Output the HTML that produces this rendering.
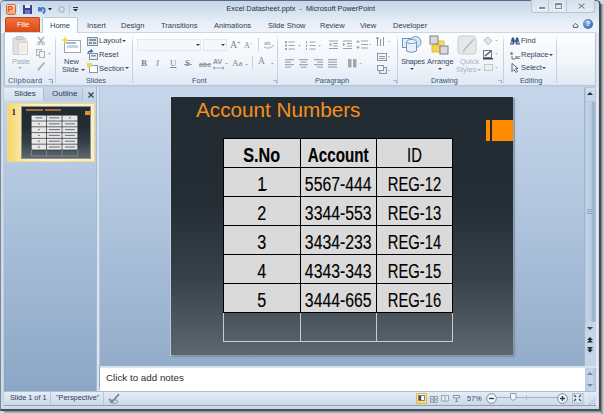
<!DOCTYPE html>
<html><head><meta charset="utf-8">
<style>
*{margin:0;padding:0;box-sizing:border-box}
html,body{width:604px;height:414px;overflow:hidden;background:#3a3d42}
body{position:relative;font-family:"Liberation Sans",sans-serif;font-size:7.5px;color:#34465c}
.a{position:absolute}
.t{position:absolute;white-space:nowrap;line-height:1}
svg{position:absolute;overflow:visible}
#desk{left:0;top:0;width:604px;height:414px;background:#d4d6d8}
#shr{left:601px;top:4px;width:3px;height:410px;background:linear-gradient(90deg,#6a6f75,#b9bcbf 60%,#d0d2d4)}
#deskb{left:4px;top:411px;width:600px;height:3px;background:linear-gradient(#7a7f85,#c4c7ca 70%,#d4d6d8)}
#win{left:0;top:0;width:601px;height:411px;background:linear-gradient(#d3deed,#c4d4e7);border:1px solid #7b8797;border-top-color:#58677e;border-right:2px solid #464c54;border-bottom:2px solid #4a5058;border-radius:5px 5px 0 0}
#title{left:1px;top:1px;width:598px;height:32px;background:linear-gradient(#c6d6ea 0px,#d4e1ef 10px,#e8eff7 22px,#f0f4f9 32px);border-radius:4px 4px 0 0}
#ribbon{left:4px;top:32px;width:592px;height:54px;background:linear-gradient(#fdfefe 0,#f1f5fa 30px,#e7eef7 43px,#dde7f3 53px);border:1px solid #b6c6da;border-top-color:#cbd7e5}
.gs{top:34px;width:1px;height:49px;background:linear-gradient(rgba(197,210,226,0),#c5d2e2 20%,#c5d2e2)}
.gl{top:77px;height:9px;font-size:7.3px;color:#3b5270}
#pane{left:4px;top:87px;width:92px;height:304px;background:linear-gradient(#c7d8eb,#8aa6c5)}
#main{left:99px;top:87px;width:486px;height:279px;background:linear-gradient(#bccfe6,#91abc9)}
#slide{left:171px;top:97px;width:342px;height:258px;background:linear-gradient(#222b32 0%,#242d34 40%,#36414a 70%,#5c676f 100%);box-shadow:1px 1px 2px rgba(40,50,70,.5)}
#notes{left:99px;top:366px;width:486px;height:25px;background:#fff;border-top:2px solid #d6e1ee}
#status{left:1px;top:391px;width:597px;height:15px;background:linear-gradient(#e2eaf4,#c6d5e7);border-top:1px solid #b8c6d8;border-bottom:1px solid #92a4ba}
.tab{top:22px;font-size:7.5px;color:#2b3d55}
.ct{text-align:center;font-size:20px;color:#000;-webkit-text-stroke:0.15px #000;transform:scaleX(.85);transform-origin:center}
.cell{position:absolute;background:#dadada;text-align:center;color:#000;font-size:18px;line-height:1}
</style></head><body>
<div id="desk" class="a"></div>
<div id="deskb" class="a"></div>
<div id="shr" class="a"></div>
<div id="win" class="a"></div>
<div id="title" class="a"></div>

<!-- quick access -->
<div class="a" style="left:5.5px;top:4px;width:10.5px;height:10.5px;background:linear-gradient(#f9d2b6,#f0a679);border:1px solid #d96a36;border-radius:1.5px"></div>
<div class="t" style="left:7.5px;top:5px;font-size:8.5px;font-weight:bold;color:#d9541c">P</div>
<div class="a" style="left:18px;top:4px;width:1px;height:10px;background:#f4f7fb"></div>
<svg style="left:23px;top:5px" width="9" height="9"><rect x="0" y="0" width="9" height="9" fill="#3d4199"/><rect x="2" y="0" width="5" height="3" fill="#e8ecf6"/><rect x="2" y="5" width="5" height="4" fill="#6d76c4"/></svg>
<svg style="left:37px;top:5px" width="9" height="9"><path d="M2 2 L2 5.5 L5.5 5.5 M2.5 5 Q5 1.5 7.5 4 Q8.5 6.5 6 8.5" stroke="#3f78c6" stroke-width="1.8" fill="none"/></svg>
<svg style="left:48px;top:8px" width="4" height="3"><path d="M0 0 H4 L2 2.5Z" fill="#222"/></svg>
<svg style="left:58px;top:6px" width="7" height="7"><circle cx="3.5" cy="3.5" r="2.7" stroke="#b3b9c2" stroke-width="1.3" fill="none"/></svg>
<div class="a" style="left:69px;top:4px;width:1px;height:10px;background:#b9c4d2"></div>
<div class="a" style="left:73px;top:7px;width:5px;height:1px;background:#333"></div>
<svg style="left:73px;top:9px" width="5" height="3"><path d="M0 0 H5 L2.5 2.5Z" fill="#222"/></svg>
<div class="t" style="left:226.5px;top:4.5px;font-size:7.3px;color:#1f2d3f">Excel Datasheet.pptx&nbsp; -&nbsp; Microsoft PowerPoint</div>
<!-- caption buttons -->
<div class="a" style="left:531px;top:0;width:64px;height:13px;border:1px solid #b9c4d1;border-top:none;border-radius:0 0 3px 3px;background:linear-gradient(#d6e0ec,#e4ebf4)"></div>
<div class="a" style="left:548px;top:0;width:1px;height:12px;background:#bcc7d4"></div>
<div class="a" style="left:566px;top:0;width:1px;height:12px;background:#bcc7d4"></div>
<div class="a" style="left:538px;top:6.5px;width:7px;height:3px;background:#fff"></div>
<div class="a" style="left:538.5px;top:7px;width:6px;height:2px;background:#7f8893"></div>
<div class="a" style="left:555px;top:2.5px;width:7px;height:6px;border:1px solid #7f8893;border-top-width:2px;box-shadow:0 0 0 0.5px #fff"></div>
<svg style="left:577.5px;top:3px" width="7" height="6"><path d="M0.5 0.5 L6.5 5.5 M6.5 0.5 L0.5 5.5" stroke="#fff" stroke-width="2.6"/><path d="M0.5 0.5 L6.5 5.5 M6.5 0.5 L0.5 5.5" stroke="#7f8893" stroke-width="1.4"/></svg>

<!-- tabs -->
<div class="a" style="left:5px;top:17px;width:35px;height:15px;background:linear-gradient(#f0703a,#d84b17);border:1px solid #c14615;border-bottom:none;border-radius:2px 2px 0 0"></div>
<div class="t" style="left:17px;top:21px;font-size:7.5px;color:#fff">File</div>
<div class="a" style="left:42px;top:17px;width:36px;height:16px;background:linear-gradient(#fdfeff,#fbfcfe);border:1px solid #bccbdc;border-bottom:none;border-radius:2px 2px 0 0;z-index:2"></div>
<div class="t tab" style="left:50px;z-index:3">Home</div>
<div class="t tab" style="left:87px">Insert</div>
<div class="t tab" style="left:121px">Design</div>
<div class="t tab" style="left:161px">Transitions</div>
<div class="t tab" style="left:214px">Animations</div>
<div class="t tab" style="left:268px">Slide Show</div>
<div class="t tab" style="left:320px">Review</div>
<div class="t tab" style="left:360px">View</div>
<div class="t tab" style="left:393px">Developer</div>
<svg style="left:571.5px;top:22.5px" width="7" height="5"><path d="M0.5 3 L3.5 0.5 L6.5 3 M1.5 3 V4.5 H5.5 V3" stroke="#5a6573" stroke-width="1" fill="none"/></svg>
<div class="a" style="left:583px;top:19px;width:10px;height:10px;border-radius:50%;background:radial-gradient(circle at 40% 35%,#8fb6e6,#3c6fb8 70%,#2c5699)"></div>
<div class="t" style="left:585.5px;top:20px;font-size:8px;font-weight:bold;color:#fff">?</div>

<div id="ribbon" class="a"></div>
<!-- group separators -->
<div class="a gs" style="left:55px"></div>
<div class="a gs" style="left:132px"></div>
<div class="a gs" style="left:277px"></div>
<div class="a gs" style="left:397px"></div>
<div class="a gs" style="left:503px"></div>
<div class="a gs" style="left:556px"></div>
<div class="t gl" style="left:8px;letter-spacing:0.35px">Clipboard</div>
<div class="t gl" style="left:86px">Slides</div>
<div class="t gl" style="left:192px">Font</div>
<div class="t gl" style="left:315px">Paragraph</div>
<div class="t gl" style="left:431px">Drawing</div>
<div class="t gl" style="left:520px">Editing</div>


<!-- CLIPBOARD -->
<svg style="left:12px;top:36px" width="17" height="20"><rect x="1" y="2" width="13" height="16.5" rx="1" fill="#e0e1e3" stroke="#c9cbce"/><rect x="4" y="0.5" width="7" height="3" rx="1" fill="#d2d4d7" stroke="#bfc2c6"/><path d="M6.5 6.5 H15.5 V18.5 H6.5Z" fill="#f7f6ee" stroke="#cfd0d0"/><path d="M8 9 H14 M8 11 H14 M8 13 H14 M8 15 H14" stroke="#e9e4cc" stroke-width="0.8"/></svg>
<div class="t" style="left:12px;top:58px;color:#a3aab2;letter-spacing:-0.25px">Paste</div>
<svg style="left:18px;top:67px" width="4" height="3"><path d="M0 0 H4 L2 2Z" fill="#aab"/></svg>
<svg style="left:37px;top:37px" width="8" height="8"><path d="M1 0 L6 6 M7 0 L2 6" stroke="#a4a9b0" stroke-width="1.2"/><circle cx="1.8" cy="6.5" r="1.3" fill="none" stroke="#a4a9b0"/><circle cx="6.2" cy="6.5" r="1.3" fill="none" stroke="#a4a9b0"/></svg>
<svg style="left:36px;top:49px" width="10" height="9"><rect x="0.5" y="0.5" width="5" height="6" fill="#eee" stroke="#aeb3ba"/><rect x="3.5" y="2.5" width="5" height="6" fill="#f4f4f4" stroke="#aeb3ba"/></svg>
<svg style="left:48px;top:53px" width="4" height="3"><path d="M0 0 H3 L1.5 1.8Z" fill="#aab"/></svg>
<svg style="left:37px;top:62px" width="9" height="9"><path d="M7.5 0.5 L3 5.5 M3.5 5 L1 8.5" stroke="#a5abb3" stroke-width="1.6"/></svg>
<svg style="left:48px;top:79px" width="5" height="5"><path d="M0.5 0.5 H4.5 V4.5 M4.5 4.5 L2 2" stroke="#7d8ea4" stroke-width="0.8" fill="none"/></svg>

<!-- SLIDES -->
<svg style="left:61px;top:36px" width="21" height="18"><rect x="3.5" y="4.5" width="16" height="12" fill="#fff" stroke="#9aa8ba"/><rect x="6" y="9" width="11" height="3" fill="#c9d4e3"/><rect x="5" y="6" width="10" height="2" fill="#aab7c8"/><path d="M4 0 L5 3 L8 4 L5 5 L4 8 L3 5 L0 4 L3 3Z" fill="#f2d640"/></svg>
<div class="t" style="left:64px;top:58px">New</div>
<div class="t" style="left:62px;top:66px">Slide</div>
<svg style="left:81px;top:69px" width="4" height="3"><path d="M0 0 H4 L2 2Z" fill="#445"/></svg>
<svg style="left:87px;top:37px" width="11" height="9"><rect x="0.5" y="0.5" width="10" height="8" fill="#dde4ee" stroke="#7f8ea3"/><rect x="2" y="2" width="7" height="2" fill="#8595ab"/><rect x="2" y="5" width="3" height="2" fill="#8595ab"/><rect x="6" y="5" width="3" height="2" fill="#8595ab"/></svg>
<div class="t" style="left:99px;top:37px">Layout</div>
<svg style="left:122px;top:40px" width="4" height="3"><path d="M0 0 H4 L2 2Z" fill="#445"/></svg>
<svg style="left:87px;top:50px" width="11" height="10"><rect x="2.5" y="3.5" width="8" height="6" fill="#e8eef6" stroke="#7f8ea3"/><rect x="4" y="5" width="5" height="1.5" fill="#8595ab"/><path d="M1 4 Q1 0.5 5 1 L4 -0.5 M5 1 L3.5 2.5" stroke="#3c64a8" stroke-width="1.4" fill="none"/></svg>
<div class="t" style="left:99px;top:50.5px">Reset</div>
<svg style="left:87px;top:63px" width="11" height="10"><rect x="2.5" y="2.5" width="8" height="7" fill="#fff" stroke="#8a98ab"/><rect x="0" y="0" width="5" height="4" fill="#f1d45e"/></svg>
<div class="t" style="left:99px;top:64.5px">Section</div>
<svg style="left:125px;top:67px" width="4" height="3"><path d="M0 0 H4 L2 2Z" fill="#445"/></svg>

<!-- FONT -->
<div class="a" style="left:137px;top:39px;width:64px;height:12px;background:#f4f7fb;border:1px solid #e0e7f0"></div>
<svg style="left:196px;top:44px" width="4" height="3"><path d="M0 0 H4 L2 2Z" fill="#333"/></svg>
<div class="a" style="left:203px;top:39px;width:24px;height:12px;background:#f4f7fb;border:1px solid #e0e7f0"></div>
<svg style="left:221px;top:44px" width="4" height="3"><path d="M0 0 H4 L2 2Z" fill="#333"/></svg>
<div class="t" style="left:230px;top:40px;font-size:10px;font-family:'Liberation Serif',serif;color:#7a8594">A</div>
<div class="t" style="left:237px;top:39px;font-size:6px;color:#7a8594">+</div>
<div class="t" style="left:244px;top:42px;font-size:8px;font-family:'Liberation Serif',serif;color:#7a8594">A</div>
<div class="t" style="left:250px;top:40px;font-size:6px;color:#7a8594">-</div>
<div class="a" style="left:258px;top:38px;width:1px;height:13px;background:#c8d3e0"></div>
<svg style="left:263px;top:38px" width="12" height="12"><text x="1" y="7" font-size="6" fill="#8a94a0" font-family="Liberation Sans">ab</text><path d="M1 9 Q6 12 11 7" stroke="#a6adb6" fill="none"/></svg>
<div class="t" style="left:141px;top:58.5px;font-size:9px;font-weight:bold;font-family:'Liberation Serif',serif;color:#7c8794">B</div>
<div class="t" style="left:156px;top:58.5px;font-size:9px;font-style:italic;font-family:'Liberation Serif',serif;color:#7c8794">I</div>
<div class="t" style="left:170px;top:58.5px;font-size:9px;text-decoration:underline;font-family:'Liberation Serif',serif;color:#7c8794">U</div>
<div class="t" style="left:185px;top:58.5px;font-size:9px;font-weight:bold;font-family:'Liberation Serif',serif;color:#7c8794">S</div>
<div class="a" style="left:184px;top:63.5px;width:8px;height:1px;background:#9aa3ad"></div>
<div class="t" style="left:199px;top:60.5px;font-size:7px;font-weight:bold;color:#8c96a1">abc</div>
<div class="a" style="left:199px;top:63.5px;width:12px;height:1px;background:#8c96a1"></div>
<div class="t" style="left:213px;top:57.5px;font-size:7px;font-weight:bold;color:#8c96a1">AV</div>
<svg style="left:213px;top:65.5px" width="11" height="4"><path d="M0 2 H11 M0 2 L2 0.5 M0 2 L2 3.5 M11 2 L9 0.5 M11 2 L9 3.5" stroke="#8c96a1" stroke-width="0.8"/></svg>
<svg style="left:225px;top:62.5px" width="3" height="2"><path d="M0 0 H3 L1.5 1.5Z" fill="#9aa"/></svg>
<div class="t" style="left:232px;top:58.5px;font-size:9px;font-family:'Liberation Serif',serif;color:#7c8794">Aa</div>
<svg style="left:245px;top:63.5px" width="3" height="2"><path d="M0 0 H3 L1.5 1.5Z" fill="#9aa"/></svg>
<div class="a" style="left:252px;top:56px;width:1px;height:13px;background:#c8d3e0"></div>
<div class="t" style="left:258px;top:56.5px;font-size:9.5px;font-family:'Liberation Serif',serif;color:#8690a0">A</div>
<svg style="left:271px;top:62.5px" width="3" height="2"><path d="M0 0 H3 L1.5 1.5Z" fill="#9aa"/></svg>
<svg style="left:273px;top:80px" width="4" height="4"><path d="M0.5 0.5 H3.5 V3.5" stroke="#95a3b5" stroke-width="0.8" fill="none"/></svg>

<!-- PARAGRAPH -->
<svg style="left:285px;top:40px" width="40" height="10">
 <g fill="#97a1ac"><rect x="0" y="1" width="2" height="2"/><rect x="0" y="4.5" width="2" height="2"/><rect x="0" y="8" width="2" height="2"/>
 <rect x="3.5" y="1.5" width="6" height="1"/><rect x="3.5" y="5" width="6" height="1"/><rect x="3.5" y="8.5" width="6" height="1"/>
 <rect x="21" y="1" width="1" height="2.5"/><rect x="21" y="4.5" width="1" height="2.5"/><rect x="21" y="8" width="1" height="2"/>
 <rect x="24.5" y="1.5" width="6" height="1"/><rect x="24.5" y="5" width="6" height="1"/><rect x="24.5" y="8.5" width="6" height="1"/></g>
 <path d="M13 5 H16 L14.5 6.5Z M33 5 H36 L34.5 6.5Z" fill="#a6aeb8"/>
</svg>
<svg style="left:329px;top:40px" width="42" height="10">
 <g fill="#97a1ac"><rect x="0" y="0.5" width="9" height="1"/><rect x="4" y="3" width="5" height="1"/><rect x="4" y="5.5" width="5" height="1"/><rect x="0" y="8" width="9" height="1"/><path d="M0 4.5 L2.5 2.8 V6.2Z"/>
 <rect x="14" y="0.5" width="9" height="1"/><rect x="18" y="3" width="5" height="1"/><rect x="18" y="5.5" width="5" height="1"/><rect x="14" y="8" width="9" height="1"/><path d="M16.5 4.5 L14 2.8 V6.2Z"/>
 <rect x="32" y="0.5" width="7" height="1"/><rect x="32" y="4" width="7" height="1"/><rect x="32" y="7.5" width="7" height="1"/><path d="M29 0 L31 2.5 H27Z M29 9 L31 6.5 H27Z"/></g>
 <path d="M40 4 H42 L41 5.5Z" fill="#a6aeb8"/>
</svg>
<svg style="left:285px;top:59px" width="80" height="9">
 <g fill="#9ea7b2"><rect x="0" y="0" width="9" height="1.2"/><rect x="0" y="2.5" width="6" height="1.2"/><rect x="0" y="5" width="9" height="1.2"/><rect x="0" y="7.5" width="6" height="1.2"/>
 <rect x="14" y="0" width="9" height="1.2"/><rect x="15.5" y="2.5" width="6" height="1.2"/><rect x="14" y="5" width="9" height="1.2"/><rect x="15.5" y="7.5" width="6" height="1.2"/>
 <rect x="29" y="0" width="9" height="1.2"/><rect x="32" y="2.5" width="6" height="1.2"/><rect x="29" y="5" width="9" height="1.2"/><rect x="32" y="7.5" width="6" height="1.2"/>
 <rect x="43" y="0" width="9" height="1.2"/><rect x="43" y="2.5" width="9" height="1.2"/><rect x="43" y="5" width="9" height="1.2"/><rect x="43" y="7.5" width="9" height="1.2"/>
 <rect x="63" y="0" width="3.5" height="8.5"/><rect x="68" y="0" width="3.5" height="8.5"/></g>
 <path d="M74.5 4 H77 L75.75 5.5Z" fill="#a6aeb8"/>
</svg>

<svg style="left:376px;top:36px" width="16" height="40">
 <g stroke="#8d97a3" fill="none" stroke-width="1"><path d="M1.5 1 V10 M4.5 3 V10 M7.5 1 V10 M0 3 L1.5 1 L3 3"/>
 <rect x="1.5" y="17.5" width="9" height="7"/><path d="M3 20.5 H9 M3 22.5 H9"/>
 <rect x="3.5" y="31.5" width="7" height="6" fill="#e6ebf1"/><rect x="1.5" y="29.5" width="6" height="5" fill="#eef1f5"/></g>
 <path d="M12 5 H14 L13 6.5Z M12 20 H14 L13 21.5Z M12 34 H14 L13 35.5Z" fill="#a6aeb8"/>
</svg>
<svg style="left:393px;top:80px" width="4" height="4"><path d="M0.5 0.5 H3.5 V3.5" stroke="#95a3b5" stroke-width="0.8" fill="none"/></svg>

<!-- DRAWING -->
<svg style="left:402px;top:35px" width="21" height="19">
 <circle cx="13.5" cy="7" r="5.5" fill="#d6e6f7" stroke="#6d95c2"/>
 <rect x="0.5" y="3.5" width="9" height="9" fill="#e3eefa" stroke="#6d95c2"/>
 <path d="M4.5 6.5 V16 Q9.5 19 14.5 16 V6.5" fill="#e8f1fb" stroke="#6d95c2"/>
 <ellipse cx="9.5" cy="6.5" rx="5" ry="2" fill="#f4f8fd" stroke="#6d95c2"/>
</svg>
<div class="t" style="left:401px;top:58px;letter-spacing:-0.3px">Shapes</div>
<svg style="left:410px;top:68px" width="4" height="3"><path d="M0 0 H4 L2 2Z" fill="#445"/></svg>
<svg style="left:429px;top:35px" width="21" height="20">
 <rect x="7" y="6" width="8" height="8" fill="#f7de5a" stroke="#e2bf33"/>
 <rect x="3" y="10" width="8" height="7" fill="#f2d54c" stroke="#dfbd38"/>
 <rect x="1" y="1" width="8" height="8" fill="#d9d9de" stroke="#7e8088"/>
 <rect x="11" y="11" width="8" height="8" fill="#d9d9de" stroke="#7e8088"/>
</svg>
<div class="t" style="left:427px;top:58px">Arrange</div>
<svg style="left:438px;top:68px" width="4" height="3"><path d="M0 0 H4 L2 2Z" fill="#445"/></svg>
<svg style="left:457px;top:35px" width="21" height="20"><rect x="1" y="1" width="18" height="18" rx="3" fill="#e6e8ea" stroke="#c8ccd1"/><path d="M17 4 L8 14 L6 17" stroke="#b9bec4" stroke-width="1.6" fill="none"/></svg>
<div class="t" style="left:460px;top:58px;color:#a8b0ba">Quick</div>
<div class="t" style="left:456px;top:66px;color:#a8b0ba">Styles</div>
<svg style="left:477px;top:69px" width="4" height="3"><path d="M0 0 H4 L2 2Z" fill="#aab"/></svg>
<svg style="left:483px;top:37px" width="16" height="40">
 <path d="M1 3 L5 0 L9 4 L5 8Z" fill="#e2e4e7" stroke="#bcc1c7"/>
 <path d="M12 3 H15 L13.5 4.5Z M12 16 H15 L13.5 17.5Z M12 30 H15 L13.5 31.5Z" fill="#b9c0c8"/>
 <rect x="0.5" y="13.5" width="8" height="7" fill="#f0f2f4" stroke="#6f7a86"/><path d="M2 19 L8 14" stroke="#4a5a6e" stroke-width="1.3"/><rect x="0" y="21" width="10" height="1.5" fill="#3a4656"/>
 <rect x="1.5" y="27.5" width="8" height="6" fill="#eceef0" stroke="#c3c8ce"/>
</svg>
<svg style="left:498px;top:80px" width="4" height="4"><path d="M0.5 0.5 H3.5 V3.5" stroke="#95a3b5" stroke-width="0.8" fill="none"/></svg>

<!-- EDITING -->
<svg style="left:509.5px;top:36.5px" width="10" height="8"><g fill="#34558e"><path d="M0 7.5 L2 0.5 H4 L4.5 3.5 H5.5 L6 0.5 H8 L10 7.5 H6 L5.5 5 H4.5 L4 7.5Z"/></g><rect x="1" y="4.5" width="2" height="2" fill="#8fb3e3"/><rect x="7" y="4.5" width="2" height="2" fill="#8fb3e3"/></svg>
<div class="t" style="left:521px;top:37px">Find</div>
<svg style="left:510px;top:50px" width="11" height="10"><text x="0" y="5" font-size="5" fill="#333" font-family="Liberation Sans">a</text><text x="5" y="9" font-size="5" fill="#333" font-family="Liberation Sans">ac</text><path d="M2 6 V9 H5" stroke="#3a8a3a" fill="none"/></svg>
<div class="t" style="left:521px;top:50.5px">Replace</div>
<svg style="left:549px;top:54px" width="4" height="3"><path d="M0 0 H4 L2 2Z" fill="#445"/></svg>
<svg style="left:511px;top:63px" width="9" height="10"><path d="M1 0.5 V8.5 L3 6.5 L5 9.5 L6.5 8.5 L4.5 5.5 H7Z" fill="#fff" stroke="#4b5563" stroke-width="0.9"/></svg>
<div class="t" style="left:521px;top:64px">Select</div>
<svg style="left:542px;top:67px" width="4" height="3"><path d="M0 0 H4 L2 2Z" fill="#445"/></svg>


<div class="a" style="left:1px;top:86px;width:597px;height:323px;background:linear-gradient(#c9d9ec,#8ea9c7 300px,#d0dcea 305px)"></div>
<div id="pane" class="a" style="left:4px;top:87px;width:93px;height:304px;background:linear-gradient(#c6d7ea 0,#b3c8e0 30%,#8ba6c5 100%);border-right:1px solid #a3b8d1"></div>
<div class="a" style="left:97px;top:87px;width:2px;height:304px;background:#dbe5f1"></div>
<div class="a" style="left:99px;top:87px;width:1px;height:279px;background:#b4c6db"></div>
<div class="a" style="left:1px;top:33px;width:3px;height:376px;background:linear-gradient(90deg,#c6d3e2,#dae4ef 60%,#a8b9ce)"></div>
<div class="a" style="left:596px;top:33px;width:3px;height:376px;background:linear-gradient(90deg,#dbe5f0,#e6edf5 50%,#c4d0de)"></div>
<div class="a" style="left:4px;top:85px;width:592px;height:2px;background:linear-gradient(#b3c3d7,#c4d2e3)"></div>
<!-- pane tabs -->
<div class="a" style="left:4px;top:88px;width:39px;height:13px;background:linear-gradient(#e3ecf6,#d3e0ef)"></div>
<div class="a" style="left:43px;top:88px;width:40px;height:13px;background:linear-gradient(#c9d8ea,#bccde2);border-left:1px solid #aebfd5;border-right:1px solid #aebfd5"></div>
<div class="a" style="left:83px;top:88px;width:13px;height:13px;background:linear-gradient(#cfdcec,#c2d2e6)"></div>
<div class="t" style="left:14px;top:90px;font-size:8px;color:#26384e">Slides</div>
<div class="t" style="left:52px;top:90px;font-size:8px;color:#26384e">Outline</div>
<svg style="left:88px;top:92px" width="6" height="6"><path d="M0.5 0.5 L5.5 5.5 M5.5 0.5 L0.5 5.5" stroke="#3a4654" stroke-width="1.3"/></svg>
<!-- thumbnail -->
<div class="a" style="left:7px;top:103px;width:88px;height:59px;background:linear-gradient(90deg,#f7d66b 0,#fae8a6 14px,#fdf3cc 40%,#fbeec0 100%);border:1px solid #f2d98a"></div>
<div class="t" style="left:11.5px;top:107.5px;font-size:9px;font-weight:bold;font-family:'Liberation Serif',serif;color:#1d2a3a">1</div>
<div class="a" style="left:21px;top:106px;width:70px;height:53px;background:linear-gradient(#222b32 0%,#242d34 40%,#36414a 70%,#5c676f 100%);border:1px solid #8a8f90"></div>
<div class="a" style="left:26px;top:108.5px;width:17px;height:2px;background:#a06c30"></div><div class="a" style="left:44.5px;top:108.5px;width:16px;height:2px;background:#a06c30"></div>
<div class="a" style="left:85px;top:111px;width:5px;height:4px;background:#f39018"></div>
<svg style="left:31px;top:115px" width="48" height="42"><rect x="0" y="0" width="47" height="35" fill="#e8e8e8"/><g stroke="#2a2f35" stroke-width="0.7" fill="none"><path d="M0 0.3 H47 M0 6 H47 M0 11.8 H47 M0 17.6 H47 M0 23.4 H47 M0 29.2 H47 M0 35 H47 M0.3 0 V35 M15.5 0 V35 M31 0 V35 M46.7 0 V35"/></g><g stroke="#9aa0a6" stroke-width="0.6" fill="none"><path d="M0.3 35 V41 H46.7 V35 M15.5 35 V41 M31 35 V41"/></g><g fill="#7d8186"><rect x="4.4" y="2.2" width="7" height="1.2"/><rect x="18.2" y="2.2" width="10" height="1.2"/><rect x="37.9" y="2.2" width="2" height="1.2"/><rect x="6.9" y="8.2" width="2" height="1.2"/><rect x="17.8" y="8.2" width="11" height="1.2"/><rect x="33.9" y="8.2" width="10" height="1.2"/><rect x="6.9" y="14.0" width="2" height="1.2"/><rect x="17.8" y="14.0" width="11" height="1.2"/><rect x="33.9" y="14.0" width="10" height="1.2"/><rect x="6.9" y="19.8" width="2" height="1.2"/><rect x="17.8" y="19.8" width="11" height="1.2"/><rect x="33.9" y="19.8" width="10" height="1.2"/><rect x="6.9" y="25.6" width="2" height="1.2"/><rect x="17.8" y="25.6" width="11" height="1.2"/><rect x="33.9" y="25.6" width="10" height="1.2"/><rect x="6.9" y="31.4" width="2" height="1.2"/><rect x="17.8" y="31.4" width="11" height="1.2"/><rect x="33.9" y="31.4" width="10" height="1.2"/></g></svg>

<!-- main -->
<div id="main" class="a" style="left:100px;top:87px;width:485px;height:279px;background:linear-gradient(#c6d6ea 0,#b3c7df 40%,#93acc9 100%)"></div>
<div class="a" style="left:170px;top:96px;width:344px;height:260px;background:#dfe7f0;opacity:.55"></div>
<div id="slide" class="a" style="left:171px;top:97px;width:342px;height:258px;background:linear-gradient(#222b32 0%,#242d34 40%,#36414a 70%,#5c676f 100%)"></div>
<div class="a" style="left:172px;top:356px;width:343px;height:1px;background:#7d90a8;opacity:.7"></div>
<div class="a" style="left:514px;top:98px;width:1px;height:258px;background:#7d90a8;opacity:.7"></div>
<div class="t" style="left:196px;top:99.5px;font-size:20.7px;color:#f5901c">Account Numbers</div>
<div class="a" style="left:486px;top:120px;width:4px;height:21px;background:#ff8c00"></div>
<div class="a" style="left:492px;top:120px;width:21px;height:21px;background:#ff8c00"></div>

<!-- table -->
<div class="a" style="left:223px;top:137.5px;width:230px;height:175.5px;background:#000"></div>
<div class="a" style="left:223px;top:313px;width:230px;height:29px;border:1px solid #c7ccd0;border-top:none"></div>
<div class="a" style="left:299.5px;top:313px;width:1px;height:29px;background:#c7ccd0"></div>
<div class="a" style="left:375.5px;top:313px;width:1px;height:29px;background:#c7ccd0"></div>
<div class="cell" style="left:224px;top:139px;width:75.5px;height:27.5px"></div>
<div class="t ct" style="left:204px;top:145px;width:115.5px;font-weight:bold;transform:scaleX(0.81)">S.No</div>
<div class="cell" style="left:301px;top:139px;width:74.5px;height:27.5px"></div>
<div class="t ct" style="left:281px;top:145px;width:114.5px;font-weight:bold;transform:scaleX(0.76)">Account</div>
<div class="cell" style="left:377px;top:139px;width:75px;height:27.5px"></div>
<div class="t ct" style="left:357px;top:145px;width:115px;font-weight:normal;transform:scaleX(0.74)">ID</div>
<div class="cell" style="left:224px;top:168px;width:75.5px;height:28px"></div>
<div class="t ct" style="left:204px;top:174px;width:115.5px;font-weight:normal;transform:scaleX(0.81)">1</div>
<div class="cell" style="left:301px;top:168px;width:74.5px;height:28px"></div>
<div class="t ct" style="left:281px;top:174px;width:114.5px;font-weight:normal;transform:scaleX(0.79)">5567-444</div>
<div class="cell" style="left:377px;top:168px;width:75px;height:28px"></div>
<div class="t ct" style="left:357px;top:174px;width:115px;font-weight:normal;transform:scaleX(0.74)">REG-12</div>
<div class="cell" style="left:224px;top:197px;width:75.5px;height:28px"></div>
<div class="t ct" style="left:204px;top:203px;width:115.5px;font-weight:normal;transform:scaleX(0.81)">2</div>
<div class="cell" style="left:301px;top:197px;width:74.5px;height:28px"></div>
<div class="t ct" style="left:281px;top:203px;width:114.5px;font-weight:normal;transform:scaleX(0.79)">3344-553</div>
<div class="cell" style="left:377px;top:197px;width:75px;height:28px"></div>
<div class="t ct" style="left:357px;top:203px;width:115px;font-weight:normal;transform:scaleX(0.74)">REG-13</div>
<div class="cell" style="left:224px;top:226px;width:75.5px;height:28px"></div>
<div class="t ct" style="left:204px;top:232px;width:115.5px;font-weight:normal;transform:scaleX(0.81)">3</div>
<div class="cell" style="left:301px;top:226px;width:74.5px;height:28px"></div>
<div class="t ct" style="left:281px;top:232px;width:114.5px;font-weight:normal;transform:scaleX(0.79)">3434-233</div>
<div class="cell" style="left:377px;top:226px;width:75px;height:28px"></div>
<div class="t ct" style="left:357px;top:232px;width:115px;font-weight:normal;transform:scaleX(0.74)">REG-14</div>
<div class="cell" style="left:224px;top:255px;width:75.5px;height:28px"></div>
<div class="t ct" style="left:204px;top:261px;width:115.5px;font-weight:normal;transform:scaleX(0.81)">4</div>
<div class="cell" style="left:301px;top:255px;width:74.5px;height:28px"></div>
<div class="t ct" style="left:281px;top:261px;width:114.5px;font-weight:normal;transform:scaleX(0.79)">4343-343</div>
<div class="cell" style="left:377px;top:255px;width:75px;height:28px"></div>
<div class="t ct" style="left:357px;top:261px;width:115px;font-weight:normal;transform:scaleX(0.74)">REG-15</div>
<div class="cell" style="left:224px;top:284px;width:75.5px;height:28px"></div>
<div class="t ct" style="left:204px;top:290px;width:115.5px;font-weight:normal;transform:scaleX(0.81)">5</div>
<div class="cell" style="left:301px;top:284px;width:74.5px;height:28px"></div>
<div class="t ct" style="left:281px;top:290px;width:114.5px;font-weight:normal;transform:scaleX(0.79)">3444-665</div>
<div class="cell" style="left:377px;top:284px;width:75px;height:28px"></div>
<div class="t ct" style="left:357px;top:290px;width:115px;font-weight:normal;transform:scaleX(0.74)">REG-16</div>


<div class="a" style="left:258.5px;top:188.7px;width:8px;height:1.4px;background:#000"></div>
<!-- scrollbar -->
<div class="a" style="left:584px;top:87px;width:12px;height:279px;background:linear-gradient(90deg,#a9bcd3,#c3d3e6 15%,#c9d7e8);border-left:1px solid #a0b3ca"></div>
<div class="a" style="left:585px;top:87px;width:11px;height:15px;background:linear-gradient(#d4dfeb,#c5d3e3);border:1px solid #b9c8da"></div>
<svg style="left:587px;top:92px" width="6" height="3"><path d="M0 3 L3 0 L6 3Z" fill="#1f2f48"/></svg>
<div class="a" style="left:584px;top:102px;width:12px;height:221px;background:linear-gradient(90deg,#9fb3cb 0,#a9bdd4 100%)"></div>
<div class="a" style="left:585px;top:102px;width:8.5px;height:220px;background:linear-gradient(90deg,#b6c9df 0,#c2d4e9 2px,#b9cce3 6px,#97acc5 8.5px);border-radius:0 0 2px 2px"></div>
<div class="a" style="left:587px;top:209px;width:5px;height:6px;background:repeating-linear-gradient(#8ea3bc 0,#8ea3bc 1px,transparent 1px,transparent 2px)"></div>
<div class="a" style="left:585px;top:322px;width:11px;height:11px;background:linear-gradient(#c9d6e6,#c3d1e3)"></div>
<svg style="left:587px;top:327px" width="6" height="3"><path d="M0 0 L3 3 L6 0Z" fill="#34475f"/></svg>
<div class="a" style="left:585px;top:333px;width:11px;height:33px;background:linear-gradient(#c9d6e6,#c3d2e5)"></div>
<svg style="left:587px;top:337px" width="6" height="15"><path d="M0 3 L3 0 L6 3Z M0 5.5 L3 2.5 L6 5.5Z M0 10 L3 13 L6 10Z M0 12.5 L3 15.5 L6 12.5Z" fill="#1f2b3b"/></svg>

<!-- notes -->
<div class="a" style="left:100px;top:366px;width:496px;height:2px;background:#d7e2ef"></div>
<div id="notes" class="a" style="left:100px;top:368px;width:485px;height:23px;background:#fff;border:none"></div>
<div class="t" style="left:106px;top:373px;font-size:9.8px;color:#2c2c2c">Click to add notes</div>
<div class="a" style="left:585px;top:368px;width:11px;height:23px;background:linear-gradient(90deg,#bccde2,#c8d7e8 60%,#b0c3da)"></div>
<svg style="left:587px;top:372px" width="6" height="3"><path d="M0 3 L3 0 L6 3Z" fill="#6b89b3"/></svg>
<svg style="left:587px;top:384px" width="6" height="3"><path d="M0 0 L3 3 L6 0Z" fill="#6b89b3"/></svg>

<!-- status -->
<div id="status" class="a" style="left:4px;top:391px;width:592px;height:15px;background:linear-gradient(#e4ecf6,#cbd9ea);border-top:1px solid #aebdd0;border-bottom:1px solid #8d9fb5"></div>
<div class="a" style="left:1px;top:406px;width:597px;height:3px;background:linear-gradient(#d6e0ec,#c8d4e2)"></div>
<div class="t" style="left:10px;top:394px;font-size:7.3px;color:#2c3e55">Slide 1 of 1</div>
<div class="a" style="left:50px;top:392px;width:1px;height:13px;background:#b9c7d8"></div>
<div class="t" style="left:56px;top:394px;font-size:7.3px;color:#2c3e55">"Perspective"</div>
<div class="a" style="left:103px;top:392px;width:1px;height:13px;background:#b9c7d8"></div>
<svg style="left:108px;top:393px" width="12" height="11"><path d="M1 6 L4 9 L11 1" stroke="#6c7c90" stroke-width="1.6" fill="none"/><ellipse cx="6" cy="8.5" rx="4" ry="1.8" fill="none" stroke="#8a98aa"/></svg>
<div class="a" style="left:415.5px;top:392.5px;width:11px;height:11px;background:linear-gradient(#fdf0c0,#f9d873);border:1px solid #e7b845"></div>
<svg style="left:417.5px;top:395px" width="7" height="6"><rect x="0.5" y="0.5" width="6" height="5" fill="#fff" stroke="#5d6878" stroke-width="0.8"/><rect x="1" y="1" width="2.2" height="4" fill="#3d4a5c"/></svg>
<svg style="left:429.5px;top:395.5px" width="8" height="7"><g fill="#dde3ea" stroke="#8a96a4" stroke-width="0.8"><rect x="0.5" y="0.5" width="3" height="2.5"/><rect x="4.5" y="0.5" width="3" height="2.5"/><rect x="0.5" y="4" width="3" height="2.5"/><rect x="4.5" y="4" width="3" height="2.5"/></g></svg>
<svg style="left:440.5px;top:395px" width="8" height="7"><path d="M0.5 0.5 Q2 0 4 1 Q6 0 7.5 0.5 V6 Q6 5.5 4 6.5 Q2 5.5 0.5 6Z M4 1 V6.5" fill="#e8ecf0" stroke="#8a96a4" stroke-width="0.8"/></svg>
<svg style="left:452.5px;top:395px" width="7" height="7"><path d="M0.5 0.5 H6.5 V3 H0.5Z M3.5 3 V6.5 M2 6.5 H5" fill="#e8ecf0" stroke="#7d8a99" stroke-width="0.9"/></svg>
<div class="t" style="left:467px;top:395px;font-size:7.2px;color:#2f4866;letter-spacing:0.1px">57%</div>
<svg style="left:485.5px;top:393px" width="11" height="11"><circle cx="5.5" cy="5.5" r="4.8" fill="#f4f6f9" stroke="#7a8798"/><path d="M3 5.5 H8" stroke="#2d3a4a" stroke-width="1.3"/></svg>
<div class="a" style="left:497px;top:397px;width:61px;height:1px;background:#a3b1c3"></div>
<div class="a" style="left:526px;top:395px;width:1px;height:5px;background:#b3c0cf"></div>
<svg style="left:509.5px;top:393px" width="7" height="8"><path d="M0.5 0.5 H6 V5.5 L3.25 7.5 L0.5 5.5Z" fill="#f3f5f8" stroke="#8794a5" stroke-width="0.9"/></svg>
<svg style="left:557px;top:393px" width="11" height="11"><circle cx="5.5" cy="5.5" r="4.8" fill="#f4f6f9" stroke="#7a8798"/><path d="M3 5.5 H8 M5.5 3 V8" stroke="#2d3a4a" stroke-width="1.3"/></svg>
<svg style="left:571.5px;top:393px" width="11" height="10"><rect x="0.5" y="0.5" width="10.5" height="9.5" fill="#e2e9f1" stroke="#a3b2c4" stroke-width="0.8"/><g stroke="#3c4a5c" stroke-width="1.1"><path d="M2 2 L4 4 M9 2 L7 4 M2 8 L4 6 M9 8 L7 6"/></g></svg>
<div class="a" style="left:586px;top:392px;width:1px;height:13px;background:#e6edf5"></div>
<svg style="left:589px;top:398px" width="7" height="7"><g fill="#a9b6c6"><rect x="5" y="0" width="1.3" height="1.2"/><rect x="5" y="2.5" width="1.3" height="1.2"/><rect x="2.5" y="2.5" width="1.3" height="1.2"/><rect x="5" y="5" width="1.3" height="1.2"/><rect x="2.5" y="5" width="1.3" height="1.2"/><rect x="0" y="5" width="1.3" height="1.2"/></g></svg>
</body></html>
